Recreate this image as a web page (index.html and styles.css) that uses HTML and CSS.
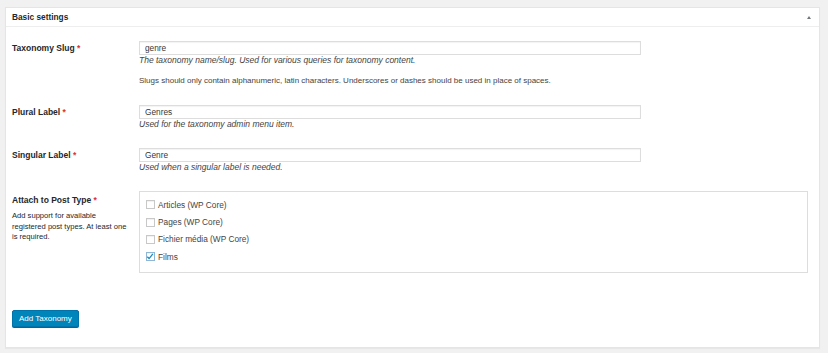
FILE: index.html
```html
<!DOCTYPE html>
<html>
<head>
    <title>Basic settings</title>
    <link rel="stylesheet" href="styles.css">
</head>
<body>
    <div class="postbox">
        <div class="postbox-header">
            <h2>Basic settings</h2>
            <span class="toggle-arrow"></span>
        </div>
        <div class="inside">
            <div class="form-row row-slug">
                <label class="row-label">Taxonomy Slug <span class="required">*</span></label>
                <div class="row-field">
                    <input type="text" class="text-input" value="genre">
                    <p class="description">The taxonomy name/slug. Used for various queries for taxonomy content.</p>
                    <p class="note">Slugs should only contain alphanumeric, latin characters. Underscores or dashes should be used in place of spaces.</p>
                </div>
            </div>
            <div class="form-row">
                <label class="row-label">Plural Label <span class="required">*</span></label>
                <div class="row-field">
                    <input type="text" class="text-input" value="Genres">
                    <p class="description">Used for the taxonomy admin menu item.</p>
                </div>
            </div>
            <div class="form-row">
                <label class="row-label">Singular Label <span class="required">*</span></label>
                <div class="row-field">
                    <input type="text" class="text-input" value="Genre">
                    <p class="description">Used when a singular label is needed.</p>
                </div>
            </div>
            <div class="form-row row-types">
                <div class="row-label">
                    <label>Attach to Post Type <span class="required">*</span></label>
                    <p class="help">Add support for available registered post types. At least one is required.</p>
                </div>
                <div class="row-field">
                    <div class="type-box">
                        <label class="check"><span class="checkbox"></span>Articles (WP Core)</label>
                        <label class="check"><span class="checkbox"></span>Pages (WP Core)</label>
                        <label class="check"><span class="checkbox"></span>Fichier média (WP Core)</label>
                        <label class="check"><span class="checkbox checked"><svg viewBox="0 0 10 10" width="9" height="9"><path d="M1.6 5.2 L3.9 7.6 L8.6 1.8" fill="none" stroke="#1e8cbe" stroke-width="1.7"/></svg></span>Films</label>
                    </div>
                </div>
            </div>
            <button class="button-primary">Add Taxonomy</button>
        </div>
    </div>
</body>
</html>
```

FILE: styles.css
```css
body {
    margin: 0;
    padding: 7px 8px 6px 5px;
    background-color: #f1f1f1;
    font-family: "Liberation Sans", Arial, sans-serif;
    font-size: 8px;
    color: #23282d;
}
.postbox {
    background-color: #fff;
    border: 1px solid #e5e5e5;
    box-shadow: 0 1px 1px rgba(0, 0, 0, 0.04);
}
.postbox-header {
    display: flex;
    align-items: center;
    justify-content: space-between;
    height: 18px;
    padding: 0 8px 0 6px;
    border-bottom: 1px solid #eee;
}
.postbox-header h2 {
    margin: 0;
    font-size: 8.3px;
    font-weight: bold;
}
.toggle-arrow {
    width: 0;
    height: 0;
    border-left: 2.5px solid transparent;
    border-right: 2.5px solid transparent;
    border-bottom: 3px solid #72777c;
}
.inside {
    padding: 14px 12px 20px 6px;
}
.form-row {
    display: flex;
    margin-bottom: 18px;
}
.row-slug {
    margin-bottom: 19px;
}
.row-types {
    margin-bottom: 37px;
}
.row-label {
    width: 127px;
    flex-shrink: 0;
    font-size: 8.5px;
    font-weight: bold;
    line-height: 14px;
}
.row-types .row-label {
    padding-top: 2px;
}
.row-types .row-label label {
    display: block;
}
.required {
    color: #dc3232;
}
.row-field {
    flex: 1;
}
.text-input {
    display: block;
    width: 502px;
    height: 14px;
    margin: 0;
    padding: 0 5px;
    border: 1px solid #ddd;
    box-shadow: inset 0 1px 1px rgba(0, 0, 0, 0.05);
    box-sizing: border-box;
    font-family: inherit;
    font-size: 8.3px;
    color: #32373c;
}
.description {
    margin: 0;
    font-size: 8.5px;
    font-style: italic;
    line-height: 11px;
    color: #444;
}
.note {
    margin: 9px 0 0;
    line-height: 11px;
    color: #444;
}
.help {
    margin: 4px 0 0;
    font-weight: normal;
    font-size: 7.6px;
    line-height: 10.5px;
    width: 116px;
}
.type-box {
    width: 669px;
    height: 82px;
    padding: 4px 6px 0;
    border: 1px solid #ddd;
    box-sizing: border-box;
}
.check {
    display: flex;
    align-items: center;
    height: 17.4px;
    font-size: 8.3px;
    color: #444;
}
.checkbox {
    display: inline-flex;
    width: 9px;
    height: 9px;
    margin-right: 3px;
    border: 1px solid #c8c8c8;
    box-shadow: inset 0 1px 1px rgba(0, 0, 0, 0.06);
    box-sizing: border-box;
}
.checkbox.checked {
    border-color: #8fb6d4;
}
.checkbox svg {
    margin: -1px 0 0 -1px;
}
.button-primary {
    display: block;
    height: 17px;
    padding: 0 6px;
    background-color: #0085ba;
    border: 1px solid #0073aa;
    border-radius: 2px;
    box-shadow: 0 1px 0 #006799;
    color: #fff;
    font-family: inherit;
    font-size: 8px;
}
```
